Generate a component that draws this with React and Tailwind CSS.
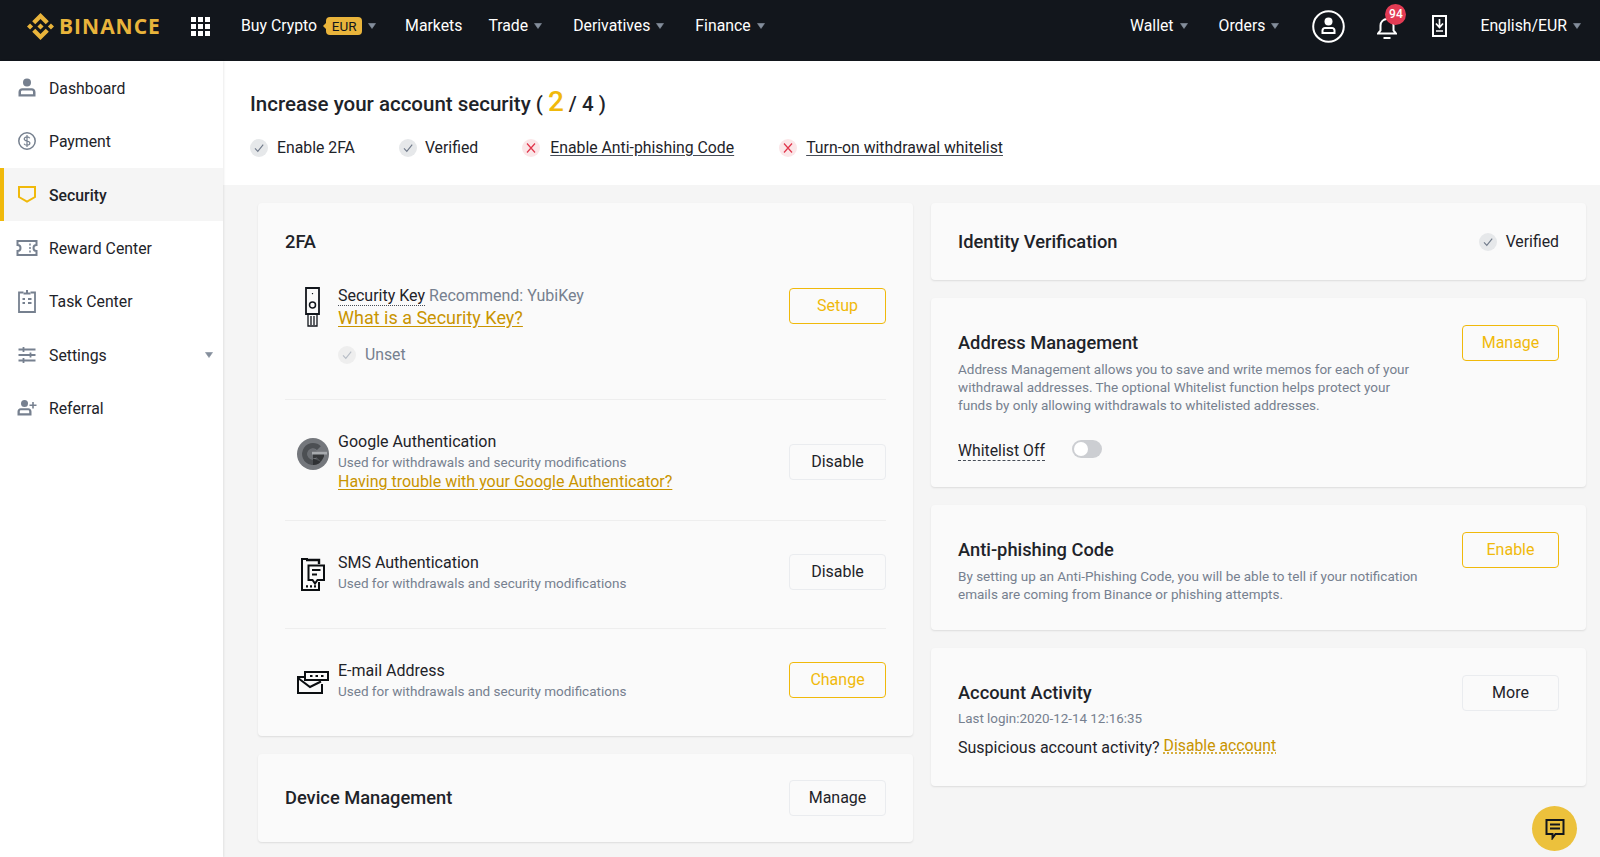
import React from 'react';

const Caret = ({ className = '' }) => (
  <svg viewBox="0 0 8 6" className={`w-2 h-[6px] shrink-0 ${className}`}>
    <path d="M0.5 0.5h7L4 5.5z" fill="#848e9c" stroke="#848e9c" strokeWidth="0.6" strokeLinejoin="round" />
  </svg>
);

const CheckBadge = ({ faded }) => (
  <span className={`w-[18px] h-[18px] rounded-full flex items-center justify-center shrink-0 ${faded ? 'bg-[#eeeeee]' : 'bg-[#e6e8ea]'}`}>
    <svg viewBox="0 0 12 12" className="w-3 h-3" fill="none" stroke={faded ? '#b7bdc6' : '#707a8a'} strokeWidth="1.1">
      <path d="M2 6.4l2.8 3L10.2 2.6" />
    </svg>
  </span>
);

const CrossBadge = () => (
  <span className="w-[18px] h-[18px] rounded-full bg-[#fbe6e8] flex items-center justify-center shrink-0">
    <svg viewBox="0 0 12 12" className="w-3 h-3" fill="none" stroke="#e0344a" strokeWidth="1.2">
      <path d="M2 1.5l8 9M10 1.5l-8 9" />
    </svg>
  </span>
);

const Btn = ({ children, gold, className = '' }) => (
  <button className={`w-[97px] h-9 rounded-[4px] border text-[16px] shrink-0 ${gold ? 'border-[#f0b90b] text-[#f0b90b]' : 'border-[#eaecef] text-[#1e2329]'} ${className}`}>
    {children}
  </button>
);

const NavText = ({ children, className = '' }) => (
  <span className={`text-[15.800px] text-white ${className}`}>{children}</span>
);

const sideIcons = {
  dashboard: (
    <g fill="#76808f">
      <circle cx="10" cy="4.500" r="4" />
      <path d="M1.500 18.500v-4.500c0-2.200 1.700-3.800 3.800-3.800h9.400c2.100 0 3.800 1.600 3.800 3.800v4.500zM4 16.200h12V14c0-.8-.6-1.400-1.300-1.400H5.300c-.7 0-1.300.6-1.300 1.400z" fillRule="evenodd" />
    </g>
  ),
  payment: (
    <g fill="none" stroke="#76808f" strokeWidth="1.5">
      <circle cx="10" cy="10" r="8.200" />
      <path d="M12.800 7.200c-.5-1-1.500-1.400-2.800-1.400-1.600 0-2.800.8-2.800 2.100 0 2.800 5.700 1.400 5.700 4.200 0 1.300-1.300 2.100-2.900 2.100-1.400 0-2.500-.5-3-1.500M10 4v12" strokeWidth="1.200" />
    </g>
  ),
  security: <path d="M2 3h16v10l-8 4.500L2 13z" fill="none" stroke="#f0b90b" strokeWidth="2" />,
  reward: (
    <g fill="none" stroke="#76808f" strokeWidth="2">
      <path d="M.5 3h19v4a3 3 0 0 0 0 6v4H.5v-4a3 3 0 0 0 0-6z" />
      <path d="M13 5.500v2M13 9v2M13 12.500v2" strokeWidth="1.500" />
    </g>
  ),
  task: (
    <g fill="none" stroke="#76808f" strokeWidth="1.800">
      <path d="M6.500 1.500H2v19.500h16V1.500h-4.500" />
      <path d="M6.500 2.500h7M10 -1v3.500" strokeWidth="2" />
      <path d="M5.500 8h2.500M11 8h3.500M5.500 12h2.500M11 12h3.500" strokeWidth="1.800" />
    </g>
  ),
  settings: (
    <g fill="none" stroke="#76808f" strokeWidth="1.800">
      <path d="M1.500 4.500h17M1.500 10h17M1.500 15.500h17" />
      <path d="M6.500 2v5M13.500 7.500v5M6.500 13v5" />
    </g>
  ),
  referral: (
    <g fill="#76808f">
      <circle cx="7.500" cy="5.500" r="3.500" />
      <path d="M.5 17.500v-4c0-1.800 1.400-3.200 3.200-3.200h7.600c1.800 0 3.200 1.400 3.200 3.200v4zM2.800 15.300h9.400v-1.800c0-.7-.5-1.200-1.200-1.200H4c-.7 0-1.200.5-1.200 1.200z" fillRule="evenodd" />
      <path d="M15.200 4h1.600v2.500h2.700v1.600h-2.700v2.500h-1.600V8.100h-2.700V6.500h2.700z" />
    </g>
  ),
};

const menu = [
  ['Dashboard', 'dashboard'],
  ['Payment', 'payment'],
  ['Security', 'security', true],
  ['Reward Center', 'reward'],
  ['Task Center', 'task'],
  ['Settings', 'settings', false, true],
  ['Referral', 'referral'],
];

const Sidebar = () => (
  <aside className="w-[223px] shrink-0 bg-white shadow-[1px_0_2px_rgba(0,0,0,0.08)] z-10">
    {menu.map(([label, icon, active, caret]) => (
      <div
        key={label}
        className={`h-[53.400px] flex items-center pl-[17px] pr-[10px] border-l-4 ${active ? 'bg-[#f5f5f5] border-[#f0b90b] text-[#1e2329] font-medium' : 'border-transparent text-[#1e2329]'}`}
      >
        <svg viewBox="0 0 20 20" className="w-5 h-5 -ml-1 shrink-0 overflow-visible">{sideIcons[icon]}</svg>
        <span className="ml-[12px] text-[15.800px] flex-1 pt-[2px]">{label}</span>
        {caret && <Caret />}
      </div>
    ))}
  </aside>
);

const Header = () => (
  <header className="h-[61px] bg-[#12161c] flex items-center pl-[27px] pr-[19px] pb-[9px] shrink-0">
    <svg viewBox="0 0 126.610 126.610" className="w-[27px] h-[27px] shrink-0" fill="#e9b43b">
      <path d="M38.730 53.200l24.590-24.580 24.600 24.600 14.300-14.310L63.320 0 24.430 38.900zM0 63.310l14.300-14.310 14.310 14.310-14.310 14.300zM38.730 73.410l24.590 24.590 24.600-24.600 14.310 14.290-38.900 38.910-38.910-38.880-.02-.02zM98.010 63.310l14.300-14.310 14.310 14.300-14.310 14.320zM77.830 63.300L63.320 48.780 52.590 59.510l-1.240 1.230-2.540 2.540 14.510 14.500 14.510-14.470z" />
    </svg>
    <span className="ml-[5px] w-[103px] text-[21px] leading-none font-bold tracking-[1px] text-[#e9b43b] font-['Open_Sans',sans-serif]">BINANCE</span>
    <div className="ml-[29px] grid grid-cols-3 gap-[2px] w-[19px] shrink-0">
      {Array.from({ length: 9 }).map((_, i) => (
        <span key={i} className="h-[5px] bg-white" />
      ))}
    </div>
    <NavText className="ml-[31px]">Buy Crypto</NavText>
    <span className="relative ml-[9px] w-[36px] h-[18px] rounded-[4px] bg-[#e9b43b] text-[#12161c] text-[13.500px] leading-[18px] text-center">
      <span className="absolute left-[-3px] top-[6px] w-0 h-0 border-y-[3px] border-y-transparent border-r-[3px] border-r-[#e9b43b]" />
      EUR
    </span>
    <Caret className="ml-[6px]" />
    <NavText className="ml-[29px]">Markets</NavText>
    <NavText className="ml-[26px]">Trade</NavText>
    <Caret className="ml-[6px]" />
    <NavText className="ml-[31px]">Derivatives</NavText>
    <Caret className="ml-[6px]" />
    <NavText className="ml-[31px]">Finance</NavText>
    <Caret className="ml-[6px]" />
    <div className="flex-1" />
    <NavText>Wallet</NavText>
    <Caret className="ml-[6px]" />
    <NavText className="ml-[31px]">Orders</NavText>
    <Caret className="ml-[6px]" />
    <svg viewBox="0 0 33 33" className="ml-[33px] w-[33px] h-[33px] shrink-0">
      <circle cx="16.500" cy="16.500" r="15.300" fill="none" stroke="#fff" strokeWidth="2" />
      <circle cx="16.500" cy="11.500" r="4" fill="#fff" />
      <path d="M9.500 24v-3.500c0-2 1.500-3.500 3.500-3.500h7c2 0 3.500 1.500 3.500 3.500V24zM11.500 22h10v-1.500c0-.8-.7-1.500-1.500-1.500h-7c-.8 0-1.500.7-1.500 1.500z" fill="#fff" fillRule="evenodd" />
    </svg>
    <div className="relative ml-[32px] w-[20px] h-[24px] shrink-0 mt-[3px]">
      <svg viewBox="0 0 20 24" className="w-5 h-6" fill="none" stroke="#fff" strokeWidth="2">
        <path d="M1 17.500h18l-2.500-3V9.500a6.500 6.500 0 0 0-13 0v5z" />
        <path d="M6.500 22h7" />
      </svg>
      <span className="absolute -top-[12px] left-[8px] w-[21px] h-[21px] rounded-full bg-[#e33b54] text-white text-[12px] leading-[21px] text-center font-medium">94</span>
    </div>
    <svg viewBox="0 0 15 22" className="ml-[35px] w-[15px] h-[22px] shrink-0" fill="none" stroke="#fff" strokeWidth="2">
      <path d="M1 1h13v20H1z" />
      <path d="M7.500 4v8M4 8.500l3.500 4 3.500-4M4 16h7" strokeWidth="1.700" />
    </svg>
    <NavText className="ml-[33px]">English/EUR</NavText>
    <Caret className="ml-[6px]" />
  </header>
);

const SecurityStrip = () => (
  <div className="h-[124px] bg-white pl-[27px] pt-[30px] shrink-0">
    <div className="h-[26px] flex items-center text-[20.500px] font-medium text-[#1e2329]">
      Increase your account security (
      <span className="text-[#f0b90b] text-[28px] leading-none ml-[5px] mr-[5px] -mt-[4px]">2</span>/ 4 )
    </div>
    <div className="mt-[19px] flex items-center text-[15.800px] text-[#1e2329]">
      <CheckBadge />
      <span className="ml-[9px] mr-[44px]">Enable 2FA</span>
      <CheckBadge />
      <span className="ml-[8px] mr-[44px]">Verified</span>
      <CrossBadge />
      <span className="ml-[10px] mr-[45px] underline underline-offset-2 decoration-[#474d57]">Enable Anti-phishing Code</span>
      <CrossBadge />
      <span className="ml-[9px] underline underline-offset-2 decoration-[#474d57]">Turn-on withdrawal whitelist</span>
    </div>
  </div>
);

const Card = ({ className = '', children }) => (
  <div className={`bg-[#fafafa] rounded-[4px] px-[27px] shadow-[0_1px_2px_rgba(0,0,0,0.1)] ${className}`}>{children}</div>
);

const Title = ({ children }) => (
  <div className="text-[18.300px] leading-[24px] font-medium text-[#1e2329]">{children}</div>
);

const Row = ({ icon, children, action, last, className = '' }) => (
  <div className={`flex items-start pt-[33px] ${last ? '' : 'border-b border-[#eeeeee]'} ${className}`}>
    <div className="w-[53px] shrink-0 flex justify-center pl-[2px]">{icon}</div>
    <div className="flex-1 -mt-[1px]">{children}</div>
    {action}
  </div>
);

const RowTitle = ({ children }) => <div className="text-[16px] leading-[20px] text-[#1e2329]">{children}</div>;
const RowSub = () => <div className="text-[13.500px] leading-[20px] text-[#76808f]">Used for withdrawals and security modifications</div>;

const KeyIcon = (
  <svg viewBox="0 0 15 40" className="w-[15px] h-[40px]" fill="none" stroke="#12161c" strokeWidth="1.800">
    <path d="M1 1h13v26H1z" />
    <circle cx="7.500" cy="18" r="3" strokeWidth="1.500" />
    <path d="M7.500 6v1.200" strokeWidth="1.200" />
    <path d="M3 27v12h9V27M6 29v9M9 29v9" strokeWidth="1.300" />
  </svg>
);

const GoogleIcon = (
  <svg viewBox="0 0 32 32" className="w-[32px] h-[32px] mt-[5px]">
    <circle cx="16" cy="16" r="16" fill="#74777c" />
    <path d="M16 5a11 11 0 0 1 7.800 3.200L20 12a5.700 5.700 0 1 0 0 8l3.800 3.800A11 11 0 1 1 16 5z" fill="#4c4f53" />
    <circle cx="15.500" cy="16" r="5" fill="#6b6e73" />
    <path d="M16 16h11v2.500c-.8 2-2 3.800-3.200 5.300L19.500 19.500c-.5.500-2 .5-3.500.5z" fill="#35373a" />
    <path d="M15 13.800h15v2.700H15z" fill="#a7aaae" />
    <path d="M16 20.500l7.800 3.300A11 11 0 0 1 16 27z" fill="#2f3134" />
  </svg>
);

const SmsIcon = (
  <svg viewBox="0 0 24 33" className="w-[24px] h-[33px] mt-[4px]" fill="none" stroke="#0b0e11" strokeWidth="2">
    <path d="M7 1H1v31h17V24" />
    <path d="M5 2h13v4" strokeWidth="2.400" />
    <path d="M7.500 7.500h15.500v14.500h-6.500l-2.500 3.500-2.500-3.500h-4z" />
    <path d="M11 12h8.500M11 16.500h5" strokeWidth="1.800" />
    <path d="M5 28.300h2M9 28.300h2M13 28.300h2" strokeWidth="2.200" />
  </svg>
);

const MailIcon = (
  <svg viewBox="0 0 32 23" className="w-[32px] h-[23px] mt-[9px]" fill="none" stroke="#0b0e11" strokeWidth="2">
    <path d="M7 6H1v16h24v-9" />
    <path d="M1 7l12 9 11-5.500" />
    <path d="M8 1h23v8H8z" />
    <path d="M13 5h2.500M18.500 5H21M24 5h2.500" strokeWidth="2.200" />
  </svg>
);

const LeftColumn = () => (
  <div className="flex-1 flex flex-col gap-[18px]">
    <Card className="h-[533px] pt-[27px]">
      <Title>2FA</Title>
      <Row icon={KeyIcon} action={<Btn gold className="mt-px">Setup</Btn>} className="h-[146px]">
        <div className="text-[16px] leading-[20px] text-[#1e2329]">
          <span className="border-b border-dotted border-[#474d57]">Security Key</span>{' '}
          <span className="text-[#76808f]">Recommend: YubiKey</span>
        </div>
        <div className="text-[18px] leading-[23px] text-[#c99400] underline underline-offset-2">What is a Security Key?</div>
        <div className="mt-[14px] flex items-center text-[15.800px] text-[#76808f]">
          <CheckBadge faded />
          <span className="ml-[9px]">Unset</span>
        </div>
      </Row>
      <Row icon={GoogleIcon} action={<Btn className="mt-[11px]">Disable</Btn>} className="h-[121px]">
        <RowTitle>Google Authentication</RowTitle>
        <RowSub />
        <div className="text-[16px] leading-[20px] text-[#c99400] underline underline-offset-2">Having trouble with your Google Authenticator?</div>
      </Row>
      <Row icon={SmsIcon} action={<Btn>Disable</Btn>} className="h-[108px]">
        <RowTitle>SMS Authentication</RowTitle>
        <RowSub />
      </Row>
      <Row icon={MailIcon} action={<Btn gold>Change</Btn>} last>
        <RowTitle>E-mail Address</RowTitle>
        <RowSub />
      </Row>
    </Card>
    <Card className="h-[88px] flex items-center justify-between">
      <Title>Device Management</Title>
      <Btn>Manage</Btn>
    </Card>
  </div>
);

const RightColumn = () => (
  <div className="flex-1 flex flex-col gap-[18px]">
    <Card className="h-[77px] flex items-center justify-between">
      <Title>Identity Verification</Title>
      <div className="flex items-center text-[15.800px] text-[#1e2329] pt-px">
        <CheckBadge />
        <span className="ml-[9px]">Verified</span>
      </div>
    </Card>
    <Card className="h-[189px] pt-[27px]">
      <div className="flex justify-between items-start">
        <div className="pt-[6px]">
          <Title>Address Management</Title>
          <p className="mt-[5px] w-[460px] text-[13.500px] leading-[18px] text-[#76808f]">
            Address Management allows you to save and write memos for each of your withdrawal addresses. The optional Whitelist function helps protect your funds by only allowing withdrawals to whitelisted addresses.
          </p>
        </div>
        <Btn gold>Manage</Btn>
      </div>
      <div className="mt-[27px] flex items-center">
        <span className="text-[15.800px] leading-[19px] text-[#1e2329] border-b border-dashed border-[#474d57]">Whitelist Off</span>
        <span className="ml-[27px] -mt-[4px] w-[30px] h-[18px] rounded-full bg-[#ccced2] p-[2px]">
          <span className="block w-[14px] h-[14px] rounded-full bg-white" />
        </span>
      </div>
    </Card>
    <Card className="h-[125px] pt-[27px]">
      <div className="flex justify-between items-start">
        <div className="pt-[6px]">
          <Title>Anti-phishing Code</Title>
          <p className="mt-[5px] w-[480px] text-[13.500px] leading-[18px] text-[#76808f]">
            By setting up an Anti-Phishing Code, you will be able to tell if your notification emails are coming from Binance or phishing attempts.
          </p>
        </div>
        <Btn gold>Enable</Btn>
      </div>
    </Card>
    <Card className="h-[138px] pt-[27px]">
      <div className="flex justify-between items-start">
        <div className="pt-[6px]">
          <Title>Account Activity</Title>
          <div className="mt-[5px] text-[13.400px] leading-[18px] text-[#76808f]">Last login:2020-12-14 12:16:35</div>
          <div className="mt-[10px] text-[16px] leading-[20px] text-[#1e2329]">
            Suspicious account activity?{' '}
            <span className="relative -top-[2px] text-[15.800px] text-[#c99400] underline decoration-dotted underline-offset-2">Disable account</span>
          </div>
        </div>
        <Btn>More</Btn>
      </div>
    </Card>
  </div>
);

export default function App() {
  return (
    <div className="relative h-[857px] overflow-hidden flex flex-col bg-[#f5f5f5] font-['Roboto','Noto_Sans',sans-serif]">
      <Header />
      <div className="flex flex-1 min-h-0">
        <Sidebar />
        <main className="flex-1 flex flex-col min-w-0">
          <SecurityStrip />
          <div className="flex gap-[18px] pl-[35px] pr-[14px] pt-[18px]">
            <LeftColumn />
            <RightColumn />
          </div>
        </main>
      </div>
      <div className="absolute left-[1532px] top-[806px] w-[45px] h-[45px] rounded-full bg-[#ecc13c] flex items-center justify-center">
        <svg viewBox="0 0 20 22" className="w-5 h-[22px]" fill="none" stroke="#12161c" strokeWidth="2">
          <path d="M1.500 2h17v14h-8l-3 4v-4h-6z" />
          <path d="M5 6.500h10M5 10.500h10" />
        </svg>
      </div>
    </div>
  );
}
